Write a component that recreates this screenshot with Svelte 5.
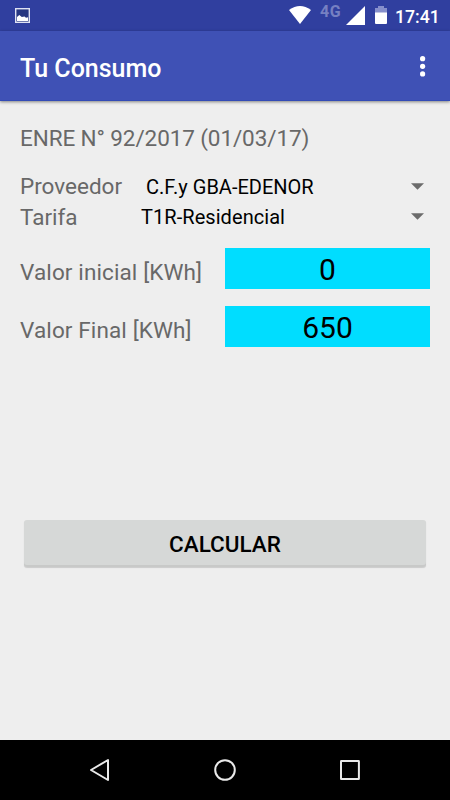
<script>
  const selectors = [
    { label: 'Proveedor', value: 'C.F.y GBA-EDENOR', kind: 'provider' },
    { label: 'Tarifa', value: 'T1R-Residencial', kind: 'rate' }
  ];
  const readings = [
    { label: 'Valor inicial [KWh]', value: '0' },
    { label: 'Valor Final [KWh]', value: '650' }
  ];
</script>

<div class="screen">
  <div class="status">
    <svg class="photo" width="15" height="15" viewBox="0 0 15 15">
      <rect x=".7" y=".7" width="13.6" height="13.6" fill="#263681" stroke="#dfe2f3" stroke-width="1.4" />
      <path d="M2 13V9L4.3 6.9L6.8 9L9.5 8.5L11 9.7L13 9.3V13Z" fill="#fff" />
    </svg>
    <svg class="wifi" width="22" height="18" viewBox="0 0 22 18">
      <path d="M0 4Q11-4 22 4L11 18Z" fill="#fff" />
    </svg>
    <span class="network">4G</span>
    <svg class="signal" width="19" height="19" viewBox="0 0 19 19"><path d="M19 0V19H0Z" fill="#fff" /></svg>
    <svg class="battery" width="12" height="18" viewBox="0 0 12 18">
      <path d="M3 0H9V2H12V7H0V2H3Z" fill="#868fcb" />
      <path d="M0 6.5H12V17Q12 18 11 18H1Q0 18 0 17Z" fill="#fff" />
    </svg>
    <span class="clock">17:41</span>
  </div>

  <header>
    <h1>Tu Consumo</h1>
    <svg width="6" height="22" viewBox="0 0 6 22" fill="#fff">
      <circle cx="2.6" cy="3.7" r="2.6" /><circle cx="2.6" cy="11.3" r="2.6" /><circle cx="2.6" cy="18.9" r="2.6" />
    </svg>
  </header>

  <main>
    <div class="resolution"><span>ENRE N° 92/2017 (01/03/17)</span></div>
    <div class="selectors">
      {#each selectors as s}
        <div class="selector {s.kind}">
          <span class="label">{s.label}</span>
          <span class="value">{s.value}</span>
          <svg width="13" height="7" viewBox="0 0 13 7"><path d="M0 .2H13L6.5 6.8Z" fill="#6b6b6b" /></svg>
        </div>
      {/each}
    </div>
    <div class="readings">
      {#each readings as r}
        <div class="reading">
          <span class="label">{r.label}</span>
          <div class="field">{r.value}</div>
        </div>
      {/each}
    </div>
    <button>CALCULAR</button>
  </main>

  <nav>
    <svg width="22" height="26" viewBox="0 0 22 26"><path d="M2 13L19 3V23Z" /></svg>
    <svg width="24" height="26" viewBox="0 0 24 26"><circle cx="12" cy="13" r="9.8" /></svg>
    <svg width="22" height="26" viewBox="0 0 22 26"><rect x="2" y="4.1" width="17.9" height="17.9" rx=".3" /></svg>
  </nav>
</div>

<style>
  .screen {
    width: 450px;
    height: 800px;
    display: flex;
    flex-direction: column;
    overflow: hidden;
    background: #eeeeee;
    color: #000;
    font-family: Roboto, sans-serif;
    white-space: nowrap;
  }
  svg { display: block; flex: none; }
  .status {
    height: 31px;
    flex: none;
    display: flex;
    align-items: flex-start;
    box-sizing: border-box;
    padding-left: 15px;
    background: #303f9f;
    color: #fff;
  }
  .photo { margin-top: 8px; }
  .wifi { margin: 6px 0 0 259px; }
  .network {
    width: 26px;
    margin-left: 9px;
    padding-top: 2px;
    color: #7680c2;
    font-size: 16px;
    font-weight: 700;
    line-height: 20px;
    letter-spacing: .5px;
  }
  .signal { margin-top: 6px; }
  .battery { margin: 6px 0 0 10px; }
  .clock {
    margin: 7px 0 0 8px;
    font-size: 17.7px;
    font-weight: 500;
    line-height: 21px;
  }
  header {
    height: 70px;
    flex: none;
    position: relative;
    display: flex;
    align-items: center;
    justify-content: space-between;
    box-sizing: border-box;
    padding: 0 24px 0 20px;
    background: #3f51b5;
    border-bottom: 1px solid #334bb6;
    box-shadow: 0 1px 3px rgb(0 0 0 / 45%);
  }
  h1 { margin: 6px 0 0; font-size: 25px; font-weight: 500; line-height: 30px; color: #fff; }
  main {
    flex: 1;
    display: flex;
    flex-direction: column;
    padding: 23px 20px 0;
  }
  .resolution, .label { color: #686868; font-size: 22.5px; line-height: 28px; }
  .resolution { letter-spacing: -.1px; }
  .selectors { margin-top: 19px; }
  .selector { height: 30.5px; display: flex; align-items: center; padding-right: 6px; }
  .selector .value { flex: 1; font-size: 20px; line-height: 28px; padding-top: 1px; }
  .provider .label { width: 126px; }
  .rate .label { width: 121px; }
  .rate .value { letter-spacing: .06px; }
  .readings { display: flex; flex-direction: column; gap: 17.5px; margin-top: 16.3px; }
  .reading { display: flex; justify-content: space-between; }
  .reading .label { padding-top: 10px; letter-spacing: .12px; }
  .field {
    width: 205px;
    height: 40.5px;
    box-sizing: border-box;
    padding-top: 2px;
    background: #00ddff;
    font-size: 30px;
    line-height: 40px;
    text-align: center;
  }
  button {
    height: 47px;
    margin: 173.2px 4px 0;
    padding: 2px 0 0;
    border: 0;
    border-radius: 3px;
    background: #d6d8d7;
    color: #000;
    font: 500 22.5px/28px Roboto, sans-serif;
    box-shadow: inset 0 -2px #c8c9c8, 0 1px 1px rgb(0 0 0 / 15%);
  }
  nav {
    height: 60px;
    flex: none;
    display: flex;
    align-items: center;
    justify-content: space-between;
    box-sizing: border-box;
    padding: 0 89px;
    background: #000;
  }
  nav svg { fill: none; stroke: #e9e9e9; stroke-width: 2; stroke-linejoin: round; }
</style>
